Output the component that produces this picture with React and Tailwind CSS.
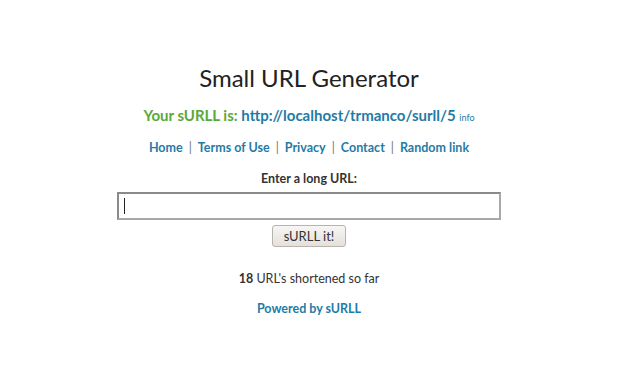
export default function App() {
  return (
    <div className="min-h-[391px] w-full bg-white font-['Lato',sans-serif] text-[#333]">
      <div className="flex flex-col items-center pt-[63px] pr-[22px]">
        <h1 className="text-[24px] leading-[30px] font-normal text-[#222]">Small URL Generator</h1>

        <p className="mt-[12px] text-[15px] leading-[20px] font-bold text-[#5aa83a]">
          Your sURLL is:{" "}
          <a className="text-[#1f7ba6]" href="#">http://localhost/trmanco/surll/5</a>{" "}
          <a className="text-[9px] font-normal text-[#1f7ba6]" href="#">info</a>
        </p>

        <nav className="mt-[12px] flex items-center gap-[6px] text-[12.5px] leading-[16px] font-bold text-[#1f7ba6]">
          <a href="#">Home</a>
          <span className="font-normal text-[#777]">|</span>
          <a href="#">Terms of Use</a>
          <span className="font-normal text-[#777]">|</span>
          <a href="#">Privacy</a>
          <span className="font-normal text-[#777]">|</span>
          <a href="#">Contact</a>
          <span className="font-normal text-[#777]">|</span>
          <a href="#">Random link</a>
        </nav>

        <label className="mt-[15px] text-[12.5px] leading-[16px] font-bold text-[#333]">Enter a long URL:</label>

        <div className="relative mt-[5px]">
          <input
            type="text"
            className="h-[28px] w-[384px] border-2 border-t-[#8a8a8a] border-l-[#8a8a8a] border-r-[#a8a8a8] border-b-[#a8a8a8] bg-white px-[4px] text-[13px] outline-none"
            defaultValue=""
          />
          {/* caret */}
          <span className="pointer-events-none absolute left-[7px] top-[6px] h-[16px] w-[1px] bg-[#222]" />
        </div>

        <button className="mt-[5px] h-[22px] w-[74px] rounded-[3px] border border-[#b8b4ac] bg-gradient-to-b from-[#f7f6f4] to-[#e4e1dc] text-[13px] leading-[18px] text-[#333]">
          sURLL it!
        </button>

        <p className="mt-[24px] text-[12.5px] leading-[16px] text-[#333]">
          <b>18</b> URL's shortened so far
        </p>

        <a href="#" className="mt-[14px] text-[12.5px] leading-[16px] font-bold text-[#1f7ba6]">Powered by sURLL</a>
      </div>
    </div>
  );
}
